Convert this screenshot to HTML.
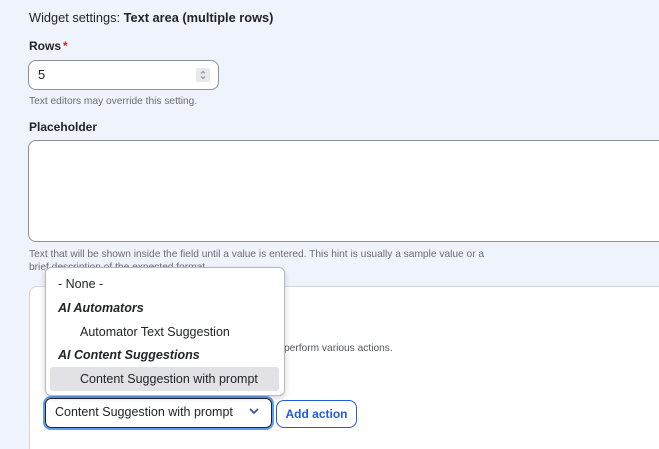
<!DOCTYPE html>
<html style="overflow:hidden;height:449px"><head><style>
*{box-sizing:border-box;margin:0;padding:0}
body{width:659px;height:449px;overflow:hidden;background:#eff3fc;font-family:"Liberation Sans",sans-serif;color:#232429;position:relative}
.a{position:absolute;white-space:nowrap}
.lbl{font-size:12px;font-weight:bold}
.help{font-size:10.2px;color:#6b6c74}
</style></head><body>
<div class="a" style="left:29px;top:10px;font-size:12.8px">Widget settings: <b>Text area (multiple rows)</b></div>
<div class="a lbl" style="left:29px;top:39px">Rows<span style="color:#d72222;margin-left:2px">*</span></div>
<div class="a" style="left:28px;top:60px;width:191px;height:30px;background:#fff;border:1px solid #8e929c;border-radius:8px"></div>
<div class="a" style="left:38px;top:67px;font-size:13px">5</div>
<div class="a" style="left:196px;top:68px;width:14px;height:14px;background:#e8e9ec;border-radius:2px"></div>
<svg class="a" style="left:196px;top:68px" width="14" height="14" viewBox="0 0 14 14"><path d="M5 5.5l2-2 2 2M5 8.5l2 2 2-2" fill="none" stroke="#888" stroke-width="1"/></svg>
<div class="a help" style="left:29px;top:96px">Text editors may override this setting.</div>
<div class="a lbl" style="left:29px;top:120px">Placeholder</div>
<div class="a" style="left:28px;top:140px;width:650px;height:102px;background:#fff;border:1px solid #8e929c;border-radius:8px"></div>
<div class="a help" style="left:29px;top:248px;line-height:13px">Text that will be shown inside the field until a value is entered. This hint is usually a sample value or a<br>brief description of the expected format.</div>
<div class="a" style="left:29px;top:286px;width:650px;height:175px;background:#fff;border:1px solid #d3d4d9;border-radius:8px"></div>
<div class="a help" style="left:284px;top:343px;color:#55565e">perform various actions.</div>
<div class="a" style="left:43px;top:396px;width:231px;height:34px;border:2px solid #5b9df5;border-radius:8px"></div>
<div class="a" style="left:45px;top:398px;width:227px;height:30px;background:#fff;border:1.5px solid #222330;border-radius:6px"></div>
<div class="a" style="left:55px;top:405px;font-size:12.5px">Content Suggestion with prompt</div>
<svg class="a" style="left:248px;top:406px" width="12" height="10" viewBox="0 0 12 10"><path d="M2 3l4 4 4-4" fill="none" stroke="#2c4bb0" stroke-width="1.6"/></svg>
<div class="a" style="left:276px;top:400px;width:81px;height:28px;border:1px solid #1f5ae0;border-radius:8px;background:#fff;color:#1f5ae0;font-size:12px;font-weight:bold;text-align:center;line-height:26px">Add action</div>
<div class="a" style="left:45px;top:267px;width:240px;height:129px;background:#fff;border:1px solid #b8b9bf;border-radius:6px;box-shadow:0 2px 6px rgba(0,0,0,.18)"></div>
<div class="a" style="left:58px;top:277px;font-size:12.5px">- None -</div>
<div class="a" style="left:58px;top:301px;font-size:12.5px;font-weight:bold;font-style:italic">AI Automators</div>
<div class="a" style="left:80px;top:325px;font-size:12.5px">Automator Text Suggestion</div>
<div class="a" style="left:58px;top:348px;font-size:12.5px;font-weight:bold;font-style:italic">AI Content Suggestions</div>
<div class="a" style="left:50px;top:367px;width:229px;height:24px;background:#e2e2e6;border-radius:3px"></div>
<div class="a" style="left:80px;top:372px;font-size:12.5px">Content Suggestion with prompt</div>
</body></html>
